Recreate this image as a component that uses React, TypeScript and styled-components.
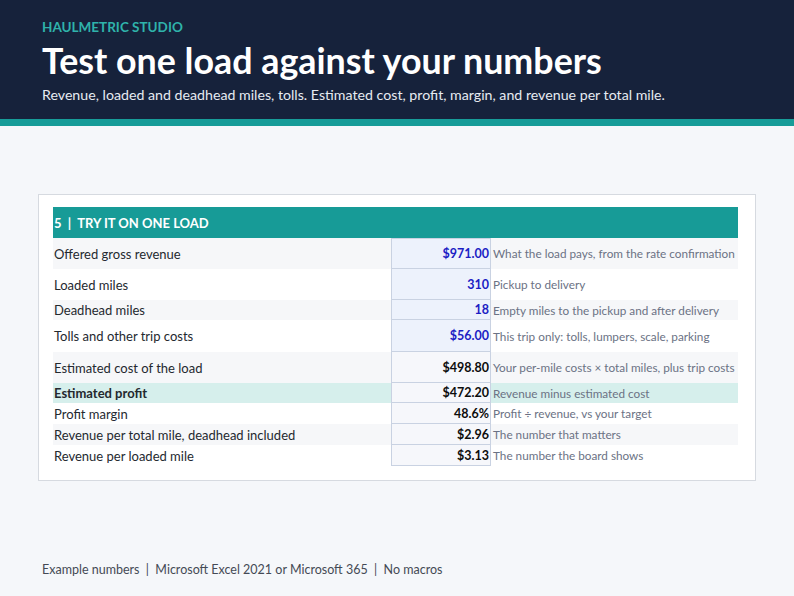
import React from "react";
import styled, { createGlobalStyle } from "styled-components";

const Global = createGlobalStyle`
  html, body { margin: 0; padding: 0; }
  body {
    background: #f5f7fa;
    font-family: Lato, "Open Sans", "Liberation Sans", sans-serif;
    width: 794px;
    height: 596px;
    overflow: hidden;
  }
`;

const Page = styled.div`
  width: 794px;
  height: 596px;
  display: flex;
  flex-direction: column;
`;

const Header = styled.header`
  background: #16223b;
  padding: 19px 0 0 42px;
  border-bottom: 7px solid #179c98;
  height: 100px;
`;

const Brand = styled.div`
  color: #2fb3ab;
  font-weight: 700;
  font-size: 13.5px;
  line-height: 17px;
`;

const Title = styled.h1`
  margin: 5px 0 0 0;
  color: #ffffff;
  font-weight: 700;
  font-size: 35.8px;
  line-height: 40px;
`;

const Subtitle = styled.p`
  margin: 5px 0 0 0;
  color: #e6ebf2;
  font-size: 14.2px;
  line-height: 18px;
`;

const Main = styled.main`
  flex: 1;
  padding: 68px 0 0 38px;
`;

const Card = styled.section`
  width: 718px;
  box-sizing: border-box;
  background: #ffffff;
  border: 1px solid #d6dae0;
  padding: 12px 17px 14px 14px;
`;

const SectionHead = styled.div`
  background: #179b97;
  color: #ffffff;
  font-weight: 700;
  font-size: 13px;
  height: 31px;
  display: flex;
  align-items: center;
  padding-left: 1px;
  white-space: pre;
`;

const Row = styled.div<{ $h: number; $bg: string }>`
  display: grid;
  grid-template-columns: 338px 100px 1fr;
  height: ${(p) => p.$h}px;
  background: ${(p) => p.$bg};
`;

const Label = styled.div<{ $bold?: boolean }>`
  display: flex;
  align-items: center;
  padding-left: 1px;
  font-size: 13px;
  color: #24292f;
  font-weight: ${(p) => (p.$bold ? 700 : 400)};
`;

const Value = styled.div<{ $input?: boolean; $first?: boolean }>`
  display: flex;
  align-items: center;
  justify-content: flex-end;
  padding-right: 1px;
  box-sizing: border-box;
  font-size: 12.5px;
  font-weight: 700;
  color: ${(p) => (p.$input ? "#1c1dc4" : "#0d0d0d")};
  background: ${(p) => (p.$input ? "#edf2fc" : "#f6f7fb")};
  border-left: 1px solid #c9d2e2;
  border-right: 1px solid #c9d2e2;
  border-bottom: 1px solid #c9d2e2;
  border-top: ${(p) => (p.$first ? "1px solid #c9d2e2" : "none")};
`;

const Note = styled.div`
  display: flex;
  align-items: center;
  padding-left: 2px;
  font-size: 11.75px;
  color: #6b7284;
  white-space: nowrap;
`;

const Footer = styled.footer`
  padding: 0 0 19px 42px;
  font-size: 12.5px;
  color: #444a55;
  white-space: pre;
`;

type R = {
  label: string;
  value: string;
  note: string;
  h: number;
  bg: string;
  input?: boolean;
  bold?: boolean;
};

const GRAY = "#f6f7f9";
const WHITE = "#ffffff";
const TEAL = "#d6efec";

const rows: R[] = [
  { label: "Offered gross revenue", value: "$971.00", note: "What the load pays, from the rate confirmation", h: 31, bg: GRAY, input: true },
  { label: "Loaded miles", value: "310", note: "Pickup to delivery", h: 31, bg: WHITE, input: true },
  { label: "Deadhead miles", value: "18", note: "Empty miles to the pickup and after delivery", h: 20, bg: GRAY, input: true },
  { label: "Tolls and other trip costs", value: "$56.00", note: "This trip only: tolls, lumpers, scale, parking", h: 32, bg: WHITE, input: true },
  { label: "Estimated cost of the load", value: "$498.80", note: "Your per-mile costs × total miles, plus trip costs", h: 31, bg: GRAY },
  { label: "Estimated profit", value: "$472.20", note: "Revenue minus estimated cost", h: 20, bg: TEAL, bold: true },
  { label: "Profit margin", value: "48.6%", note: "Profit ÷ revenue, vs your target", h: 21, bg: WHITE },
  { label: "Revenue per total mile, deadhead included", value: "$2.96", note: "The number that matters", h: 21, bg: GRAY },
  { label: "Revenue per loaded mile", value: "$3.13", note: "The number the board shows", h: 21, bg: WHITE },
];

export default function App() {
  return (
    <Page>
      <Global />
      <Header>
        <Brand>HAULMETRIC STUDIO</Brand>
        <Title>Test one load against your numbers</Title>
        <Subtitle>
          Revenue, loaded and deadhead miles, tolls. Estimated cost, profit, margin, and revenue per total mile.
        </Subtitle>
      </Header>
      <Main>
        <Card>
          <SectionHead>{"5  |  TRY IT ON ONE LOAD"}</SectionHead>
          {rows.map((r, i) => (
            <Row key={r.label} $h={r.h} $bg={r.bg}>
              <Label $bold={r.bold}>{r.label}</Label>
              <Value $input={r.input} $first={i === 0}>{r.value}</Value>
              <Note>{r.note}</Note>
            </Row>
          ))}
        </Card>
      </Main>
      <Footer>{"Example numbers  |  Microsoft Excel 2021 or Microsoft 365  |  No macros"}</Footer>
    </Page>
  );
}
